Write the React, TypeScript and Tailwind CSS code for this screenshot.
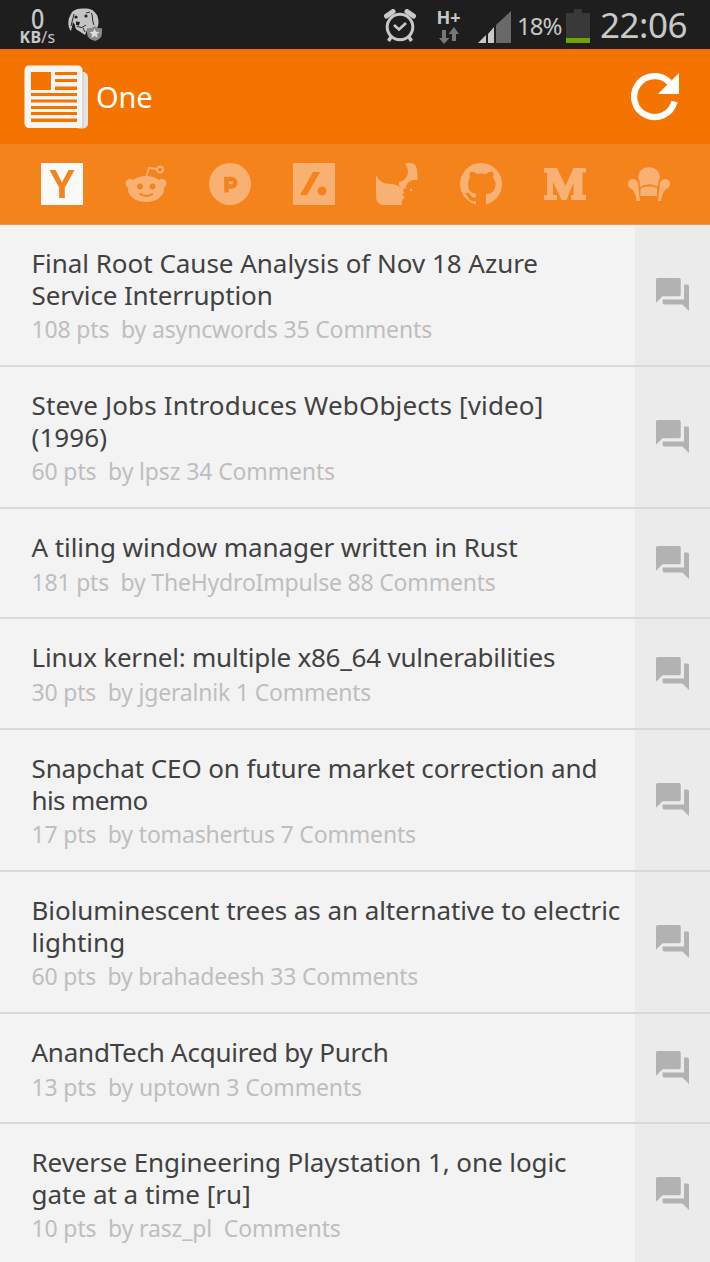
import React from "react";

const stories = [
    {
        lines: [
            { text: "Final Root Cause Analysis of Nov 18 Azure", track: "tracking-[-0.02px]" },
            { text: "Service Interruption", track: "tracking-[-0.14px]" },
        ],
        meta: "108 pts  by asyncwords 35 Comments",
        metaTrack: "tracking-[-0.15px]",
        height: "h-[142px]",
    },
    {
        lines: [
            { text: "Steve Jobs Introduces WebObjects [video]", track: "tracking-[0.16px]" },
            { text: "(1996)", track: "tracking-[0.1px]" },
        ],
        meta: "60 pts  by lpsz 34 Comments",
        metaTrack: "tracking-[-0.14px]",
        height: "h-[142px]",
    },
    {
        lines: [{ text: "A tiling window manager written in Rust", track: "tracking-[-0.07px]" }],
        meta: "181 pts  by TheHydroImpulse 88 Comments",
        metaTrack: "tracking-[-0.2px]",
        height: "h-[110px]",
    },
    {
        lines: [{ text: "Linux kernel: multiple x86_64 vulnerabilities", track: "tracking-[-0.21px]" }],
        meta: "30 pts  by jgeralnik 1 Comments",
        metaTrack: "tracking-[-0.19px]",
        height: "h-[111px]",
    },
    {
        lines: [
            { text: "Snapchat CEO on future market correction and", track: "tracking-[-0.11px]" },
            { text: "his memo", track: "tracking-[-0.6px]" },
        ],
        meta: "17 pts  by tomashertus 7 Comments",
        metaTrack: "tracking-[-0.17px]",
        height: "h-[142px]",
    },
    {
        lines: [
            { text: "Bioluminescent trees as an alternative to electric", track: "tracking-[-0.07px]" },
            { text: "lighting", track: "tracking-[0px]" },
        ],
        meta: "60 pts  by brahadeesh 33 Comments",
        metaTrack: "tracking-[-0.22px]",
        height: "h-[142px]",
    },
    {
        lines: [{ text: "AnandTech Acquired by Purch", track: "tracking-[-0.24px]" }],
        meta: "13 pts  by uptown 3 Comments",
        metaTrack: "tracking-[-0.15px]",
        height: "h-[110px]",
    },
    {
        lines: [
            { text: "Reverse Engineering Playstation 1, one logic", track: "tracking-[-0.08px]" },
            { text: "gate at a time [ru]", track: "tracking-[0px]" },
        ],
        meta: "10 pts  by rasz_pl  Comments",
        metaTrack: "tracking-[-0.14px]",
        height: "h-[142px]",
    },
];

function DogIcon() {
    return (
        <svg className="ml-[13px] h-[34px] w-[35px]" viewBox="0 0 35 34">
            <path d="M4 4C7 1 12 0 17 0.500C22 0 26 2 29 7C31 12 31 17 29 20L19 22L17 27L11 23C8 22 7 20 7 17L5 14L3 23C0 20 0 14 1 10Z" fill="#c4c4c4" />
            <path d="M6 6L4 14L3 18M18 5L22 4M23.500 5C25 9 24 13 26 17M9 18.500L14 19.500L18 17M15 20L17 24" fill="none" stroke="#2a2a2a" strokeWidth="1" />
            <circle cx="8" cy="9" r="1.600" fill="#1e1e1e" />
            <circle cx="18" cy="8" r="1.600" fill="#1e1e1e" />
            <path d="M8 13.500L12 14L11 17.500L8 17Z" fill="#1e1e1e" />
            <path d="M19 20Q23 21 27 18Q30 21 34 20V25Q34 31 27 33Q19 31 19 25Z" fill="#868b88" />
            <path d="m26.500 20.500 1.500 3.200 3.500.3-2.600 2.300.8 3.500-3.200-1.900-3.200 1.900.8-3.500-2.600-2.300 3.500-.3Z" fill="#ddd" />
        </svg>
    );
}

function StatusBar() {
    return (
        <div className="flex h-[49px] items-start bg-[#1e1e1e] text-[#c8c8c8]">
            <div className="ml-5 mt-[7px] flex w-[35px] flex-col items-center">
                <span className="h-6 scale-x-[0.86] text-[27px] font-medium leading-6">0</span>
                <span className="flex text-[16px] leading-3 tracking-[0.3px]">
                    <b>KB</b>/s
                </span>
            </div>
            <div className="mt-2">
                <DogIcon />
            </div>
            <svg className="ml-auto mt-[9px] h-[34px] w-8" viewBox="0 0 32 34" fill="none" stroke="#c8c8c8">
                <circle cx="16" cy="18" r="12.800" strokeWidth="3" />
                <path d="M10 16L15 20.500L22 14" strokeWidth="2.700" />
                <path d="M2.500 7L9 2.500M29.500 7L23 2.500" strokeWidth="5" strokeLinecap="round" />
                <path d="M7 28L4.500 32M25 28L27.500 32" strokeWidth="3.500" />
            </svg>
            <div className="ml-5 mt-[8px] flex w-[25px] flex-col items-center">
                <b className="h-[19px] text-[18px] leading-[19px]">H+</b>
                <svg className="h-[17px] w-5" viewBox="0 0 20 17" fill="#777">
                    <path d="M3 3H7V11H10.500L5 17L0 11H3ZM13 14H17V7H20L15 0L9.500 7H13Z" />
                </svg>
            </div>
            <svg className="ml-[17px] mt-[10px] h-[34px] w-[34px]" viewBox="0 0 34 34">
                <path d="M0 33L8 25V33ZM10 24L16 17V33H10Z" fill="#c9c9c9" />
                <path d="M18 15L33 1V33H18Z" fill="#696969" />
            </svg>
            <span className="ml-[5px] mt-[10px] w-[46px] whitespace-nowrap text-[24px] leading-8 tracking-[-1px]">18%</span>
            <svg className="ml-[3px] mt-[9px] h-[35px] w-6" viewBox="0 0 24 35">
                <path d="M8 0H16V4H24V29H0V4H8Z" fill="#393939" />
                <path d="M0 29H24V34H0Z" fill="#70a500" />
            </svg>
            <span className="ml-[10px] mr-[23px] mt-[5px] w-[87px] whitespace-nowrap text-[35px] leading-10 tracking-[-0.5px]">22:06</span>
        </div>
    );
}

function Header() {
    return (
        <header className="flex h-[95px] items-center bg-[#f57400] text-white">
            <svg className="ml-6 h-16 w-16" viewBox="0 0 64 64">
                <rect x="50" y="7" width="14" height="56.500" rx="5" fill="#e4e4e4" />
                <rect x="0.500" y="0.500" width="58" height="62.500" rx="4.500" fill="#f5f5f5" />
                <path d="M59 7V63" stroke="#c9c9c9" strokeWidth="1" />
                <path d="M7 7H27V25H7ZM31 7H53V10H31ZM31 14H53V17H31ZM31 21.500H53V25H31ZM7 28H53V31H7ZM7 34.500H53V37.500H7ZM7 41H53V44H7ZM7 47H53V50H7ZM7 53.500H53V57H7Z" fill="#f57400" />
            </svg>
            <h1 className="ml-2 mt-px text-[29px] leading-10 tracking-[-0.2px]">One</h1>
            <svg className="ml-auto mr-[31px] h-12 w-12" viewBox="0 0 48 48">
                <path d="M43.500 28.500A20.500 20.500 0 1 1 38.500 9.500" fill="none" stroke="#fff" strokeWidth="6.300" />
                <path d="M48 0V21H27Z" fill="#fff" />
            </svg>
        </header>
    );
}

function SourceTabs() {
    return (
        <nav className="flex h-[81px] items-center justify-between border-b border-[#f7963f] bg-[#f4831c] pl-[41px] pr-10">
            <svg className="h-[42px] w-[42px]" viewBox="0 0 42 42">
                <path d="M0 0H42V42H0Z" fill="#fafafa" />
                <path d="M8.500 7H14.500L21 19.500L27.500 7H33.500L23.800 24.500V35H18.200V24.500Z" fill="#f4831c" />
            </svg>
            <svg className="h-[42px] w-[42px]" viewBox="0 0 42 42" fill="#f8b172">
                <circle cx="5" cy="20.500" r="4.500" />
                <circle cx="37" cy="20.500" r="4.500" />
                <ellipse cx="21" cy="26" rx="18" ry="13" />
                <path d="M21 14L24 5L32 6" fill="none" stroke="#f8b172" strokeWidth="1.800" />
                <circle cx="35" cy="6.500" r="3" fill="none" stroke="#f8b172" strokeWidth="1.800" />
                <circle cx="15" cy="23.500" r="3" fill="#f4831c" />
                <circle cx="27.500" cy="23.500" r="3" fill="#f4831c" />
                <path d="M14.500 30.500Q21 35.500 28 30.500" fill="none" stroke="#f4831c" strokeWidth="1.800" />
            </svg>
            <svg className="h-[42px] w-[42px]" viewBox="0 0 42 42">
                <circle cx="21" cy="21" r="21" fill="#f8b172" />
                <path d="M17.500 29.500V16H22.500A3.400 3.400 0 0 1 22.500 23.500H17.500" fill="none" stroke="#f4831c" strokeWidth="4.600" />
            </svg>
            <svg className="h-[42px] w-[42px]" viewBox="0 0 42 42">
                <path d="M0 0H42V42H0Z" fill="#f8b172" />
                <path d="M20 9H27L14 32H7Z" fill="#f4831c" />
                <circle cx="29" cy="28" r="4.500" fill="#f4831c" />
            </svg>
            <svg className="h-[42px] w-[42px]" viewBox="0 0 42 42" fill="#f8b172">
                <path d="M0 12Q4 22 17 21Q22 22 25 25Q22 22 23 19Q32 17 32 8Q32 4 29 1Q33-1 38 1Q42 3 41.500 17Q35 16 31 21Q29 26 27 27L28 30L26 32L29 34L27 36Q25 39 26 42H7Q0 41 0 33Z" />
                <circle cx="35" cy="27" r="1.200" />
                <circle cx="30" cy="25" r="0.700" />
            </svg>
            <svg className="h-[42px] w-[42px]" viewBox="0 0 42 42">
                <circle cx="21" cy="21" r="21" fill="#f8b172" />
                <path d="M10 9Q14 8 17 11Q21 10 26 11Q29 8 33 9Q34 12 33 15Q37 19 35 25Q33 31 26 31V42H16V38Q9 39 8 34Q6 31 5 30Q9 29 11 33Q13 36 16 34V31Q8 30 8 22Q8 17 10 14Q9 12 10 9Z" fill="#f4831c" />
            </svg>
            <svg className="h-[42px] w-[42px]" viewBox="0 0 42 42">
                <path d="M0 5H13L21.500 23L29.500 5H42V9.500H38.500V32H42V37H27V32H29.500V20L22.500 37H17.500L9 19V32H13V37H0V32H3V9.500H0Z" fill="#f8b172" />
            </svg>
            <svg className="h-[42px] w-[42px]" viewBox="0 0 42 42" fill="#f8b172">
                <path d="M10 14C11 1 31 1 32 14Q30 18 30 24Q21 18.500 12 24Q12 18 10 14Z" />
                <path d="M13 25Q21 21.500 29 25V33H12.500Q12 28 13 25ZM0 21Q0 16 6 16Q11 18 10.500 24L12 38H8.500Q8 30 4 26Q0 25 0 21ZM42 21Q42 16 36 16Q31 18 31.500 24L30 38H33Q34 30 38 26Q42 25 42 21Z" />
            </svg>
        </nav>
    );
}

function Story({ story }: { story: (typeof stories)[number] }) {
    return (
        <li className={`flex shrink-0 border-b-2 border-[#d9d9d9] bg-[#f3f3f3] ${story.height}`}>
            <div className="flex-1 whitespace-pre pl-[31.5px] pt-[23px]">
                <h2 className="text-[26px] leading-[31.600px] text-[#414141]">
                    {story.lines.map((line) => (
                        <span key={line.text} className={`block w-max ${line.track}`}>
                            {line.text}
                        </span>
                    ))}
                </h2>
                <p className={`w-max text-[23px] leading-9 text-[#bebebe] ${story.metaTrack}`}>{story.meta}</p>
            </div>
            <button className="flex w-[75px] items-center justify-center bg-[#ebebeb] pr-px pb-px">
                <svg className="h-[33px] w-[33px]" viewBox="2 2 20 20" fill="#b2b2b2">
                    <path d="M21 6h-2v9H6v2c0 .55.45 1 1 1h11l4 4V7c0-.55-.45-1-1-1zm-4 6V3c0-.55-.45-1-1-1H3c-.55 0-1 .45-1 1v14l4-4h10c.55 0 1-.45 1-1z" />
                </svg>
            </button>
        </li>
    );
}

export default function App() {
    return (
        <main className="flex h-[1262px] w-[710px] flex-col overflow-hidden bg-[#f3f3f3] font-['Noto_Sans',sans-serif]">
            <StatusBar />
            <Header />
            <SourceTabs />
            <ul className="flex flex-1 flex-col overflow-hidden">
                {stories.map((story) => (
                    <Story key={story.meta} story={story} />
                ))}
            </ul>
        </main>
    );
}
